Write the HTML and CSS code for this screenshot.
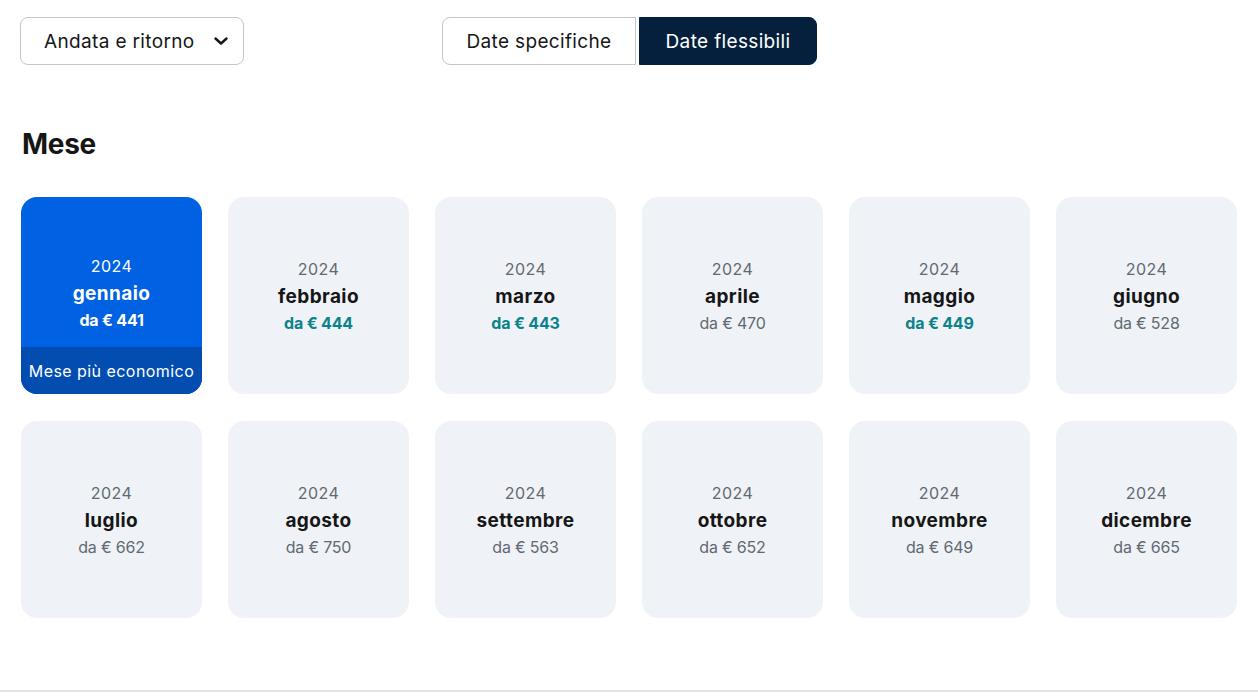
FILE: index.html
```html
<!DOCTYPE html>
<html lang="it">
<head>
<meta charset="utf-8">
<link rel="stylesheet" href="styles.css">
</head>
<body>
<div class="page">
  <div class="topbar">
    <button class="select">
      <span>Andata e ritorno</span>
      <svg class="chev" width="16" height="16" viewBox="0 0 16 16"><path d="M2.5 5.5l5.5 5 5.5-5" fill="none" stroke="#161616" stroke-width="2.4" stroke-linecap="round" stroke-linejoin="round"/></svg>
    </button>
    <div class="toggle">
      <button class="tog">Date specifiche</button>
      <button class="tog active">Date flessibili</button>
    </div>
  </div>
  <h2 class="title">Mese</h2>
  <div class="grid">
    <div class="card best">
      <div class="content">
        <div class="year">2024</div>
        <div class="month">gennaio</div>
        <div class="price">da € 441</div>
      </div>
      <div class="strip">Mese più economico</div>
    </div>
    <div class="card"><div class="content"><div class="year">2024</div><div class="month">febbraio</div><div class="price cheap">da € 444</div></div></div>
    <div class="card"><div class="content"><div class="year">2024</div><div class="month">marzo</div><div class="price cheap">da € 443</div></div></div>
    <div class="card"><div class="content"><div class="year">2024</div><div class="month">aprile</div><div class="price">da € 470</div></div></div>
    <div class="card"><div class="content"><div class="year">2024</div><div class="month">maggio</div><div class="price cheap">da € 449</div></div></div>
    <div class="card"><div class="content"><div class="year">2024</div><div class="month">giugno</div><div class="price">da € 528</div></div></div>
    <div class="card"><div class="content"><div class="year">2024</div><div class="month">luglio</div><div class="price">da € 662</div></div></div>
    <div class="card"><div class="content"><div class="year">2024</div><div class="month">agosto</div><div class="price">da € 750</div></div></div>
    <div class="card"><div class="content"><div class="year">2024</div><div class="month">settembre</div><div class="price">da € 563</div></div></div>
    <div class="card"><div class="content"><div class="year">2024</div><div class="month">ottobre</div><div class="price">da € 652</div></div></div>
    <div class="card"><div class="content"><div class="year">2024</div><div class="month">novembre</div><div class="price">da € 649</div></div></div>
    <div class="card"><div class="content"><div class="year">2024</div><div class="month">dicembre</div><div class="price">da € 665</div></div></div>
  </div>
</div>
<div class="divider"></div>
</body>
</html>
```
FILE: styles.css
```css
* { box-sizing: border-box; }
html, body { margin: 0; padding: 0; background: #fff; }
body {
  font-family: Inter, "Noto Sans", "Liberation Sans", sans-serif;
  color: #161616;
  height: 697px;
  position: relative;
}
.page {
  padding: 17px 21px 0 21px;
}
.topbar {
  display: flex;
  align-items: center;
  height: 48px;
}
.select {
  display: flex;
  align-items: center;
  justify-content: space-between;
  width: 224px;
  height: 48px;
  margin-left: -1px;
  padding: 0 14px 0 23px;
  background: #fff;
  border: 1.5px solid #c1c7cf;
  border-radius: 8px;
  font-family: inherit;
  font-size: 19px;
  color: #161616;
  letter-spacing: 0.35px;
}
.toggle {
  display: flex;
  margin-left: 198px;
  gap: 3px;
}
.tog {
  height: 48px;
  font-family: inherit;
  font-size: 19px;
  letter-spacing: 0.35px;
  background: #fff;
  color: #161616;
  border: 1.5px solid #c1c7cf;
  border-radius: 8px 0 0 8px;
  width: 194px;
  padding: 0;
}
.tog.active {
  background: #05203c;
  color: #fff;
  border-color: #05203c;
  border-radius: 0 8px 8px 0;
  width: 178px;
}
.title {
  margin: 61px 0 0 1px;
  font-size: 28px;
  font-weight: 700;
  line-height: 36px;
  letter-spacing: -0.3px;
}
.grid {
  display: grid;
  grid-template-columns: repeat(6, 181px);
  column-gap: 26px;
  row-gap: 27px;
  margin-top: 35px;
}
.card {
  position: relative;
  height: 197px;
  border-radius: 16px;
  background: #eff3f8;
  display: flex;
  align-items: center;
  justify-content: center;
  overflow: hidden;
}
.content {
  display: flex;
  flex-direction: column;
  align-items: center;
  text-align: center;
  padding-top: 1px;
  padding-bottom: 2px;
}
.year {
  font-size: 16px;
  line-height: 24px;
  color: #626971;
  letter-spacing: 0.5px;
}
.month {
  margin-top: 1px;
  font-size: 19px;
  font-weight: 700;
  line-height: 30px;
  letter-spacing: 0.4px;
}
.price {
  font-size: 16px;
  line-height: 22px;
  color: #626971;
  letter-spacing: -0.2px;
}
.price.cheap {
  color: #0c838a;
  font-weight: 700;
}
.card.best {
  background: #0062e3;
}
.card.best .content {
  padding-bottom: 8px;
}
.card.best .year,
.card.best .month,
.card.best .price {
  color: #fff;
}
.card.best .price { font-weight: 700; }
.strip {
  position: absolute;
  left: 0;
  right: 0;
  bottom: 0;
  height: 47px;
  background: #024daf;
  color: #fff;
  font-size: 16px;
  letter-spacing: 0.45px;
  display: flex;
  align-items: center;
  justify-content: center;
}
.divider {
  position: absolute;
  left: 0;
  right: 0;
  top: 690px;
  height: 2px;
  background: #e0e3e8;
}
```
